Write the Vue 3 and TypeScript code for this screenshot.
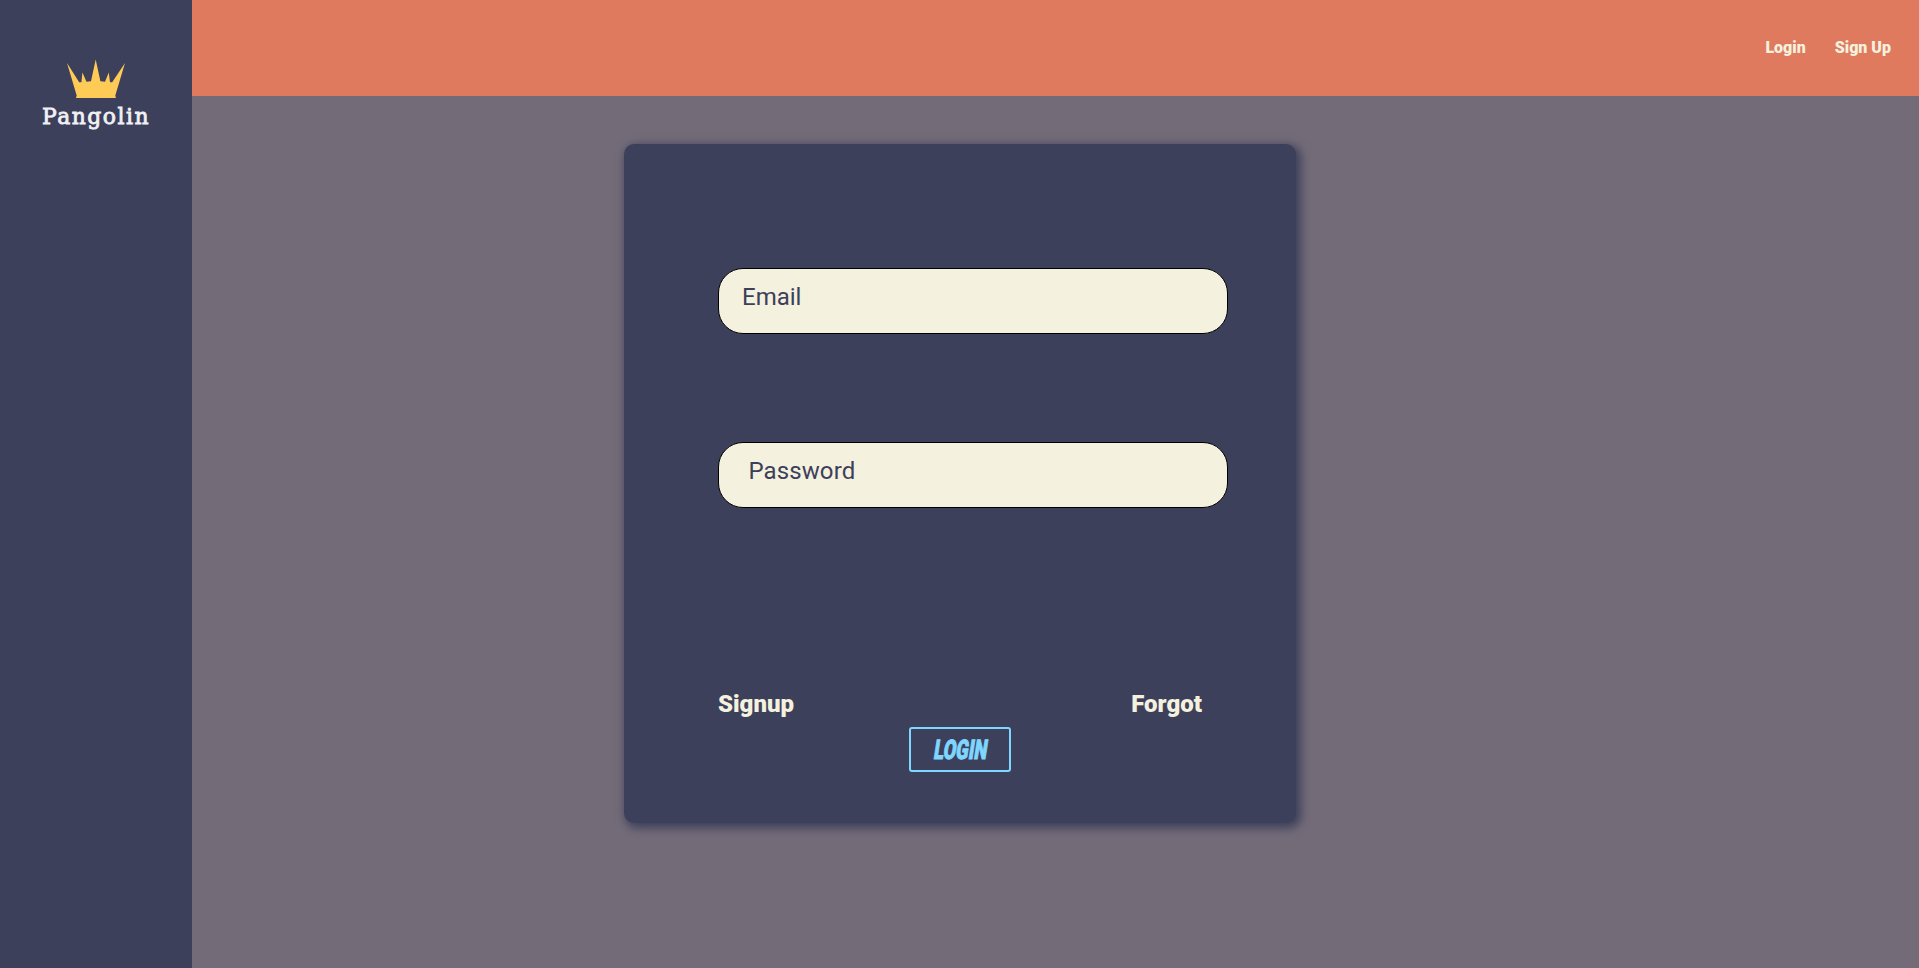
<script setup lang="ts">
import { ref } from 'vue'

const navLinks: string[] = ['Login', 'Sign Up']
const email = ref('')
const password = ref('')
</script>

<template>
  <div class="layout">
    <aside class="sidebar">
      <svg class="logo" width="116" height="80" viewBox="0 0 116 80" role="img" aria-label="Pangolin">
        <path
          class="crown"
          d="M30 4 L42.2 23.3 L44.4 23.2 L45.4 13.5 L49.5 22.7 L54 22.2 L58.7 0.5 L63.4 22.2 L68 22.7 L71.8 13.5 L73 23.2 L75.2 23.3 L88 4 L78.3 36.5 L78.9 39 L39 39 L39.7 36.5 Z"
        />
        <text class="brand" x="5" y="64.8" textLength="108" lengthAdjust="spacingAndGlyphs">Pangolin</text>
      </svg>
    </aside>
    <div class="main">
      <header class="topbar">
        <nav class="nav">
          <a v-for="link in navLinks" :key="link" class="nav-link">{{ link }}</a>
        </nav>
      </header>
      <form class="card" @submit.prevent>
        <input v-model="email" class="field" type="text" placeholder="Email" />
        <input v-model="password" class="field field-password" type="password" placeholder="Password" />
        <div class="links">
          <a>Signup</a>
          <a>Forgot</a>
        </div>
        <button class="submit" type="submit"><span class="submit-text">LOGIN</span></button>
      </form>
    </div>
  </div>
</template>

<style>
body {
  margin: 0;
  overflow: hidden;
}
</style>

<style scoped>
.layout {
  display: flex;
  height: 100vh;
  background: #736b78;
  font-family: Roboto, sans-serif;
}
.sidebar {
  flex: 0 0 192px;
  background: #3d405b;
}
.logo {
  display: block;
  margin: 59px 0 0 37px;
}
.crown {
  fill: #ffcb57;
}
.brand {
  fill: #f1f1f5;
  stroke: #f1f1f5;
  stroke-width: 0.8px;
  font: 400 22.5px 'DejaVu Serif', serif;
  letter-spacing: 1.5px;
}
.main {
  flex: 1;
}
.topbar {
  display: flex;
  justify-content: flex-end;
  height: 96px;
  background: #e07a5f;
}
.nav {
  display: flex;
  gap: 29px;
  padding: 38px 28px 0 0;
}
.nav-link {
  color: #f4f1de;
  font-size: 16px;
  line-height: 19px;
  font-weight: 900;
}
.card {
  box-sizing: border-box;
  display: flex;
  flex-direction: column;
  width: 672px;
  height: 679px;
  margin: 48px 0 0 432px;
  padding: 124px 68px 0 94px;
  border-radius: 10px;
  background: #3d405b;
  box-shadow: 3px 3px 10px 2px #3d405b;
}
.field {
  box-sizing: border-box;
  width: 510px;
  height: 66px;
  margin: 0 0 108px;
  padding: 0 24px 8px 23px;
  border: 1px solid #000;
  border-radius: 25px;
  outline: none;
  background: #f4f1de;
  color: #3d405b;
  font: 400 24px Roboto, sans-serif;
}
.field-password {
  padding-left: 29.5px;
  letter-spacing: 0.1px;
}
.field::placeholder {
  color: #3d405b;
  opacity: 1;
}
.links {
  display: flex;
  justify-content: space-between;
  width: 484px;
  margin-top: 74px;
  color: #f4f1de;
  font-size: 24px;
  line-height: 28px;
  font-weight: 900;
}
.submit {
  box-sizing: border-box;
  display: flex;
  align-items: center;
  justify-content: center;
  width: 102px;
  height: 45px;
  margin: 9px 0 0 191px;
  padding: 0;
  border: 2px solid #7fd6ff;
  border-radius: 3px;
  background: transparent;
}
.submit-text {
  color: #7fd6ff;
  font: 900 27px/32px Roboto, sans-serif;
  -webkit-text-stroke: 1px #7fd6ff;
  transform: translateX(1px) scaleX(0.68) skewX(-13deg);
}
</style>
